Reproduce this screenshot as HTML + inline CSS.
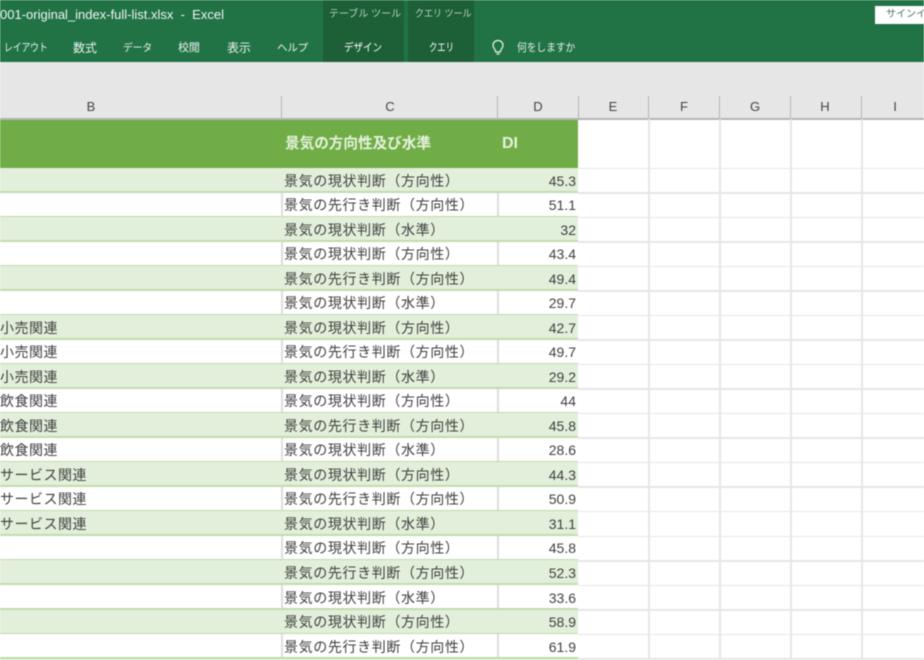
<!DOCTYPE html>
<html lang="ja"><head><meta charset="utf-8"><title>Excel</title>
<style>
*{box-sizing:border-box}
html,body{margin:0;padding:0;width:924px;height:660px;overflow:hidden;background:#fff}
body{position:relative;font-family:"Liberation Sans","Noto Sans CJK JP",sans-serif}
#p{position:absolute;left:0;top:0;width:924px;height:660px;overflow:hidden;filter:blur(.45px)}
.a{position:absolute;white-space:nowrap}
.rb{top:38.500px;font-size:10.500px;line-height:18px;color:#eaf3ed;letter-spacing:-.1px;transform-origin:0 50%}
.cl{top:98px;height:18px;line-height:18px;font-size:13px;color:#444;text-align:center}
.t{top:96px;width:1px;height:23px;background:#b5b5b5}
.v{top:119px;width:1.5px;height:541px;background:#e6e6e6}
.h{left:578px;width:346px;height:1.5px;background:#e6e6e6}
.r{position:absolute;left:0;width:578px;height:24.53px;color:#3f3f3f;font-size:14px;line-height:23px}
.o{background:#e2efda}
.r:after{content:"";position:absolute;left:0;right:0;bottom:0;height:1.5px;background:#c0dcae}
.e:before{content:"";position:absolute;left:281px;top:0;width:1.5px;height:24.53px;background:#dedede;box-shadow:216px 0 #dedede}
.b{position:absolute;left:0;top:1.500px;letter-spacing:.5px}
.c{position:absolute;left:284px;top:1.500px;letter-spacing:.62px}
.d{position:absolute;right:2px;top:1.500px;font-size:14px}
</style></head><body><div id="p">

<div class="a" style="left:0;top:0;width:924px;height:62px;background:#217346"></div>
<div class="a" style="left:323px;top:0;width:81px;height:62px;background:#1d6038"></div>
<div class="a" style="left:408px;top:0;width:66px;height:62px;background:#1d6038"></div>
<div class="a" style="left:0;top:6px;font-size:13px;line-height:18px;color:#f0f6f2">001-original_index-full-list.xlsx &nbsp;- &nbsp;Excel</div>
<div class="a" style="left:329px;top:6px;font-size:10px;line-height:18px;color:#b9d3c3">テーブル ツール</div>
<div class="a" style="left:415px;top:6px;font-size:10px;line-height:18px;color:#b9d3c3;transform:scaleX(.9);transform-origin:0 50%">クエリ ツール</div>
<div class="a rb" style="left:4px;font-size:11px;transform:scaleX(.8)">レイアウト</div>
<div class="a rb" style="left:73px;font-size:12px">数式</div>
<div class="a rb" style="left:123px;font-size:10.500px;transform:scaleX(.93)">データ</div>
<div class="a rb" style="left:178px;font-size:11px">校閲</div>
<div class="a rb" style="left:227px;font-size:12px">表示</div>
<div class="a rb" style="left:277px">ヘルプ</div>
<div class="a rb" style="left:344px;color:#fff;font-size:11px;transform:scaleX(.87)">デザイン</div>
<div class="a rb" style="left:429px;color:#fff;font-size:11px;transform:scaleX(.76)">クエリ</div>
<svg class="a" style="left:490px;top:39px" width="16" height="18" viewBox="0 0 16 18" fill="none" stroke="#eef5f0" stroke-width="1.2"><path d="M8 1.500C5 1.500 3 3.700 3 6.300C3 8.500 4.500 9.500 5.300 11.500L5.800 13H10.200L10.700 11.500C11.500 9.500 13 8.500 13 6.300C13 3.700 11 1.500 8 1.500Z"/><path d="M6.500 15H9.500"/></svg>
<div class="a rb" style="left:517px;color:#e4efe8;font-size:11px;transform:scaleX(.89)">何をしますか</div>
<div class="a" style="left:875px;top:6px;width:49px;height:18px;background:#fff;color:#4d6f5b;font-size:10px;line-height:18px;padding-left:11px;overflow:hidden">サインイン</div>

<div class="a" style="left:0;top:62px;width:924px;height:57.500px;background:#e6e6e6"></div>
<div class="a" style="left:0;top:118px;width:924px;height:1.5px;background:#b4b4b4"></div>
<div class="a t" style="left:281px"></div><div class="a t" style="left:497px"></div><div class="a t" style="left:578px"></div><div class="a t" style="left:648px"></div><div class="a t" style="left:719px"></div><div class="a t" style="left:790px"></div><div class="a t" style="left:861px"></div>
<div class="a cl" style="left:81px;width:20px">B</div>
<div class="a cl" style="left:380px;width:20px">C</div>
<div class="a cl" style="left:528px;width:20px">D</div>
<div class="a cl" style="left:603px;width:20px">E</div>
<div class="a cl" style="left:674px;width:20px">F</div>
<div class="a cl" style="left:745px;width:20px">G</div>
<div class="a cl" style="left:815px;width:20px">H</div>
<div class="a cl" style="left:885px;width:20px">I</div>

<div class="a v" style="left:648px"></div><div class="a v" style="left:719px"></div><div class="a v" style="left:790px"></div><div class="a v" style="left:861px"></div>
<div class="a h" style="top:167.500px"></div><div class="a h" style="top:192px"></div><div class="a h" style="top:216.500px"></div><div class="a h" style="top:241px"></div><div class="a h" style="top:265.600px"></div><div class="a h" style="top:290.100px"></div><div class="a h" style="top:314.700px"></div><div class="a h" style="top:339.200px"></div><div class="a h" style="top:363.700px"></div><div class="a h" style="top:388.300px"></div><div class="a h" style="top:412.800px"></div><div class="a h" style="top:437.300px"></div><div class="a h" style="top:461.900px"></div><div class="a h" style="top:486.400px"></div><div class="a h" style="top:510.900px"></div><div class="a h" style="top:535.500px"></div><div class="a h" style="top:560px"></div><div class="a h" style="top:584.500px"></div><div class="a h" style="top:609.100px"></div><div class="a h" style="top:633.600px"></div><div class="a h" style="top:658.100px"></div>

<div class="a" style="left:0;top:119.500px;width:578px;height:48.500px;background:#70ad47"></div>
<div class="a" style="left:285px;top:134px;font-size:14.600px;font-weight:bold;line-height:20px;color:#e6f2dd">景気の方向性及び水準</div>
<div class="a" style="left:502px;top:134px;font-size:16px;font-weight:bold;line-height:20px;color:#e6f2dd">DI</div>

<div class="r o" style="top:168px"><span class="c">景気の現状判断（方向性）</span><span class="d">45.3</span></div>
<div class="r e" style="top:192.530px"><span class="c">景気の先行き判断（方向性）</span><span class="d">51.1</span></div>
<div class="r o" style="top:217.060px"><span class="c">景気の現状判断（水準）</span><span class="d">32</span></div>
<div class="r e" style="top:241.590px"><span class="c">景気の現状判断（方向性）</span><span class="d">43.4</span></div>
<div class="r o" style="top:266.120px"><span class="c">景気の先行き判断（方向性）</span><span class="d">49.4</span></div>
<div class="r e" style="top:290.650px"><span class="c">景気の現状判断（水準）</span><span class="d">29.7</span></div>
<div class="r o" style="top:315.180px"><span class="b">小売関連</span><span class="c">景気の現状判断（方向性）</span><span class="d">42.7</span></div>
<div class="r e" style="top:339.710px"><span class="b">小売関連</span><span class="c">景気の先行き判断（方向性）</span><span class="d">49.7</span></div>
<div class="r o" style="top:364.240px"><span class="b">小売関連</span><span class="c">景気の現状判断（水準）</span><span class="d">29.2</span></div>
<div class="r e" style="top:388.770px"><span class="b">飲食関連</span><span class="c">景気の現状判断（方向性）</span><span class="d">44</span></div>
<div class="r o" style="top:413.300px"><span class="b">飲食関連</span><span class="c">景気の先行き判断（方向性）</span><span class="d">45.8</span></div>
<div class="r e" style="top:437.830px"><span class="b">飲食関連</span><span class="c">景気の現状判断（水準）</span><span class="d">28.6</span></div>
<div class="r o" style="top:462.360px"><span class="b">サービス関連</span><span class="c">景気の現状判断（方向性）</span><span class="d">44.3</span></div>
<div class="r e" style="top:486.890px"><span class="b">サービス関連</span><span class="c">景気の先行き判断（方向性）</span><span class="d">50.9</span></div>
<div class="r o" style="top:511.420px"><span class="b">サービス関連</span><span class="c">景気の現状判断（水準）</span><span class="d">31.1</span></div>
<div class="r e" style="top:535.950px"><span class="c">景気の現状判断（方向性）</span><span class="d">45.8</span></div>
<div class="r o" style="top:560.480px"><span class="c">景気の先行き判断（方向性）</span><span class="d">52.3</span></div>
<div class="r e" style="top:585.010px"><span class="c">景気の現状判断（水準）</span><span class="d">33.6</span></div>
<div class="r o" style="top:609.540px"><span class="c">景気の現状判断（方向性）</span><span class="d">58.9</span></div>
<div class="r e" style="top:634.070px"><span class="c">景気の先行き判断（方向性）</span><span class="d">61.9</span></div>
<div class="r o" style="top:658.600px"></div>

</div></body></html>
